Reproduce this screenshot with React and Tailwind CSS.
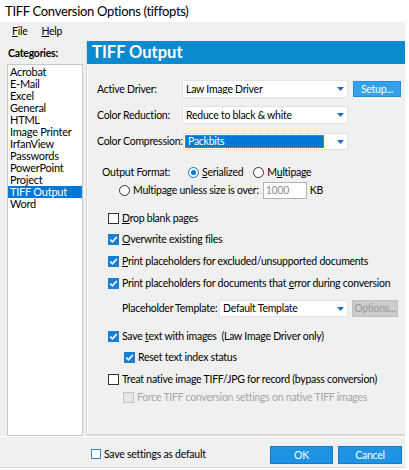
import React from 'react';

const font = { fontFamily: 'Lato, "Noto Sans", Arial, sans-serif' };

function Arrow({ disabled }) {
  return (
    <svg width="7" height="4" viewBox="0 0 7 4" className="shrink-0">
      <path d="M0 0 H7 L3.5 4 Z" fill={disabled ? '#a0a0a0' : '#1a6fc0'} />
    </svg>
  );
}

function Select({ value, className, focused }) {
  return (
    <div className={`flex items-center bg-white border border-[#e3e3e3] pr-[3px] ${className}`}>
      {focused ? (
        <div className="flex-1 h-full py-[1px] pl-[1px] pr-[13px]">
          <div className="h-full bg-[#0078d7] text-white pl-[2px] flex items-center border border-dotted border-[#c08040]">{value}</div>
        </div>
      ) : (
        <div className="flex-1 pl-[3px] truncate">{value}</div>
      )}
      <Arrow />
    </div>
  );
}

function Check({ checked, disabled, className = '' }) {
  if (disabled) {
    return <div className={`w-[11px] h-[11px] border border-[#c4c4c4] bg-[#e6e6e6] shrink-0 ${className}`} />;
  }
  if (checked) {
    return (
      <div className={`w-[11px] h-[11px] bg-[#1c7fd3] shrink-0 flex items-center justify-center ${className}`}>
        <svg width="9" height="9" viewBox="0 0 9 9">
          <path d="M1.3 4.6 L3.5 6.8 L7.8 2" stroke="#fff" strokeWidth="1.6" fill="none" />
        </svg>
      </div>
    );
  }
  return <div className={`w-[11px] h-[11px] border border-[#333] bg-white shrink-0 ${className}`} />;
}

function Radio({ checked, className = '' }) {
  return (
    <div className={`w-[11px] h-[11px] rounded-full bg-white shrink-0 flex items-center justify-center border ${checked ? 'border-[#0078d7]' : 'border-[#333]'} ${className}`}>
      {checked && <div className="w-[5px] h-[5px] rounded-full bg-[#0078d7]" />}
    </div>
  );
}

function CheckRow({ checked, disabled, children, className = '' }) {
  return (
    <div className={`flex items-center h-[16px] ${className}`}>
      <Check checked={checked} disabled={disabled} />
      <span className={`ml-[3px] ${disabled ? 'text-[#a6a6a6]' : ''}`}>{children}</span>
    </div>
  );
}

const categories = ['Acrobat', 'E-Mail', 'Excel', 'General', 'HTML', 'Image Printer', 'IrfanView', 'Passwords', 'PowerPoint', 'Project', 'TIFF Output', 'Word'];

export default function App() {
  return (
    <div className="w-[409px] h-[470px] bg-[#f0f0f0] text-black text-[10.5px] tracking-[-0.25px] leading-none whitespace-nowrap overflow-hidden flex flex-col" style={font}>
      {/* title bar */}
      <div className="h-[22px] bg-white flex items-center pl-[5px] text-[13px] tracking-[-0.3px] shrink-0">TIFF Conversion Options (tiffopts)</div>

      <div className="flex-1 flex flex-col border-r-[4px] border-white">
        {/* menu */}
        <div className="h-[19px] flex items-center pl-[12px] gap-[14px] shrink-0">
          <span><u>F</u>ile</span>
          <span><u>H</u>elp</span>
        </div>

        <div className="flex shrink-0 h-[395px]">
          {/* categories */}
          <div className="w-[86px] pl-[7px] pr-[3px] flex flex-col">
            <div className="font-bold pl-[1px] mt-[6px] h-[12px] flex items-center">Categories:</div>
            <div className="mt-[5px] h-[375px] bg-white border border-[#c9c9c9] pt-[1px]">
              {categories.map(c => (
                <div key={c} className={`h-[12px] flex items-center pl-[2px] text-[11px] ${c === 'TIFF Output' ? 'bg-[#0078d7] text-white' : ''}`}>{c}</div>
              ))}
            </div>
          </div>

          {/* panel */}
          <div className="w-[319px] flex flex-col border-l border-b-2 border-[#d8d8d8]">
            <div className="h-[23px] bg-[#0b8ad0] text-white font-bold text-[16.5px] tracking-normal flex items-center pl-[5px] shrink-0">TIFF Output</div>
            <div className="flex-1 flex flex-col border-l border-white pl-[9px]">
              <div className="flex items-center mt-[16px] h-[18px]">
                <span className="w-[85px]">Active Driver:</span>
                <Select value="Law Image Driver" className="w-[166px] h-[18px]" />
                <div className="ml-[5px] w-[48px] h-[16px] bg-[#36a0ea] border border-[#1e8ee0] text-white flex items-center justify-center">Setup...</div>
              </div>
              <div className="flex items-center mt-[8px] h-[18px]">
                <span className="w-[85px]">Color Reduction:</span>
                <Select value="Reduce to black & white" className="w-[166px] h-[18px]" />
              </div>
              <div className="flex items-center mt-[9px] h-[17px]">
                <span className="w-[86px]">Color Compression:</span>
                <Select value="Packbits" focused className="w-[165px] h-[17px]" />
              </div>

              <div className="flex items-center mt-[14px] h-[16px] pl-[5px]">
                <span className="w-[86px]">Output Format:</span>
                <Radio checked />
                <span className="ml-[3px]"><u>S</u>erialized</span>
                <Radio className="ml-[10px]" />
                <span className="ml-[3px]">M<u>u</u>ltipage</span>
              </div>
              <div className="flex items-center mt-[2px] h-[17px] pl-[22px]">
                <Radio />
                <span className="ml-[3px]">Multipage unless size is over:</span>
                <div className="ml-[4px] w-[44px] h-[17px] bg-white border border-[#b4b4b4] text-[#8c8c8c] flex items-center pl-[2px]">1000</div>
                <span className="ml-[3px]">KB</span>
              </div>

              <div className="pl-[11px] flex flex-col">
                <CheckRow className="mt-[11px]"><u>D</u>rop blank pages</CheckRow>
                <CheckRow checked className="mt-[5px]"><u>O</u>verwrite existing files</CheckRow>
                <CheckRow checked className="mt-[6px]"><u>P</u>rint placeholders for excluded/unsupported documents</CheckRow>
                <CheckRow checked className="mt-[6px]">Print placeholders for documents that <u>e</u>rror during conversion</CheckRow>
                <div className="flex items-center mt-[9px] h-[17px] pl-[14px]">
                  <span className="w-[97px]">Placeholder Template:</span>
                  <Select value="Default Template" className="w-[129px] h-[17px]" />
                  <div className="ml-[4px] w-[46px] h-[17px] bg-[#cccccc] border border-[#bfbfbf] text-[#9a9a9a] flex items-center justify-center">Options...</div>
                </div>
                <CheckRow checked className="mt-[11px]">Save <u>t</u>ext with images&nbsp; (Law Image Driver only)</CheckRow>
                <div className="pl-[16px] flex flex-col">
                  <CheckRow checked className="mt-[5px]">Reset text index status</CheckRow>
                </div>
                <CheckRow className="mt-[6px]">Treat native image TIFF/JPG for record (bypass conversion)</CheckRow>
                <div className="pl-[15px] flex flex-col">
                  <CheckRow disabled className="mt-[2px]">Force TIFF conversion settings on native TIFF images</CheckRow>
                </div>
              </div>
            </div>
          </div>
        </div>

        {/* bottom bar */}
        <div className="flex-1 flex items-start border-t border-white">
          <div className="ml-[91px] mt-[11px] flex items-center h-[12px]">
            <div className="w-[10px] h-[10px] border border-[#3c7fbf] bg-white" />
            <span className="ml-[3px]">Save settings as default</span>
          </div>
          <div className="ml-auto mr-[3px] mt-[9px] flex gap-[5px]">
            <div className="w-[63px] h-[18px] bg-[#1e93e2] border border-[#0f7dcf] text-white flex items-center justify-center">OK</div>
            <div className="w-[64px] h-[18px] bg-[#1e93e2] border border-[#0f7dcf] text-white flex items-center justify-center">Cancel</div>
          </div>
        </div>
        <div className="h-[3px] bg-white border-t border-[#d8d8d8] shrink-0" />
      </div>
    </div>
  );
}
